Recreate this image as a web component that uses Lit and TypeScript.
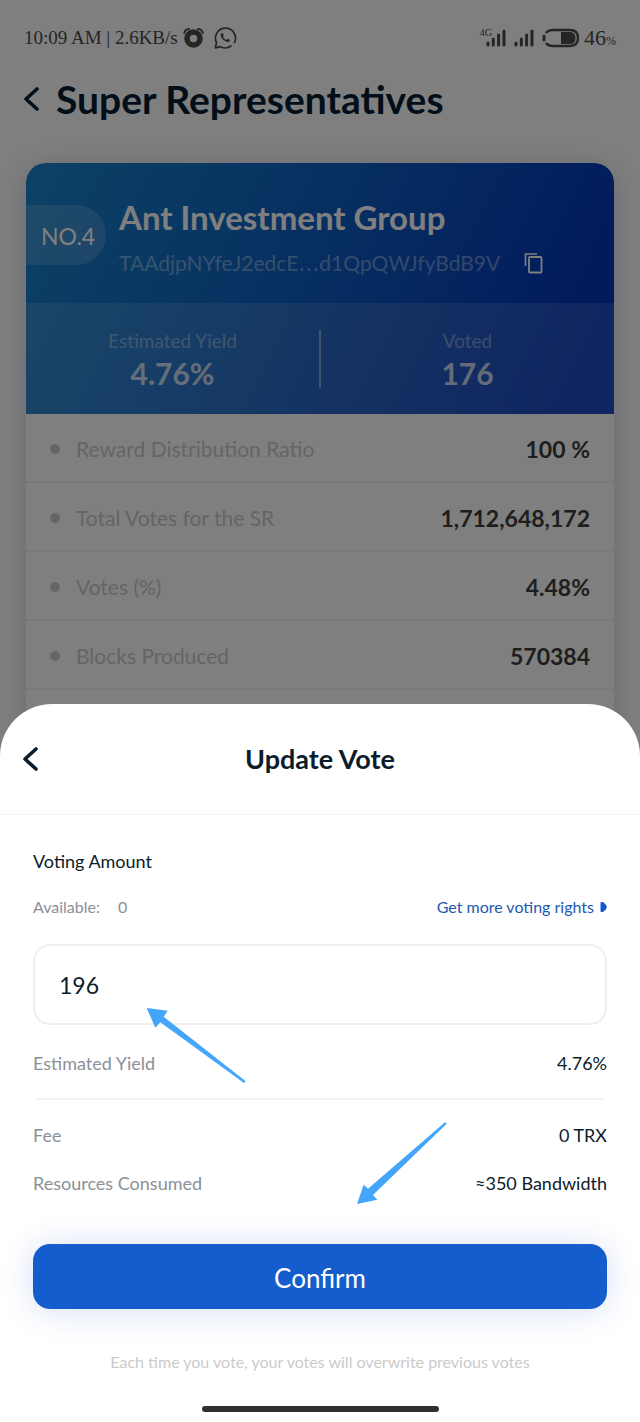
import { LitElement, html, css, svg } from "lit";
import { customElement, property, state } from "lit/decorators.js";

const chevron = svg`<path d="M13 2 L2 12 L13 22" fill="none" stroke="currentColor" stroke-width="3.600" stroke-linecap="round" stroke-linejoin="round" />`;

@customElement("status-bar")
class StatusBar extends LitElement {
  static styles = css`
    :host {
      display: flex;
      justify-content: space-between;
      align-items: center;
      height: 76px;
      padding: 0 24px;
      color: #4a4a4a;
      font-family: "Liberation Serif", serif;
      font-size: 22px;
    }
    .group {
      display: flex;
      align-items: center;
      gap: 8px;
    }
    .left {
      gap: 5px;
      font-size: 19px;
    }
    .battery {
      display: flex;
      align-items: center;
      gap: 4px;
    }
    .icon {
      display: block;
      overflow: visible;
    }
    .network {
      display: flex;
      align-items: flex-start;
    }
    .generation {
      font-size: 10px;
      line-height: 8px;
      margin-right: -6px;
    }
    .small {
      font-size: 12px;
    }
  `;

  private bars() {
    return html`<svg class="icon" width="20" height="18" viewBox="0 0 20 18" aria-hidden="true">
      <g stroke="currentColor" stroke-width="3" stroke-linecap="round">
        <path d="M2 14V16M7.300 10V16M12.600 6V16M18 2V16" />
      </g>
    </svg>`;
  }

  render() {
    return html`
      <div class="group left">
        <span>10:09 AM | 2.6KB/s</span>
        <svg class="icon" width="21" height="20" viewBox="0 0 21 20" aria-hidden="true">
          <circle cx="10.500" cy="10.500" r="6.500" fill="none" stroke="currentColor" stroke-width="5.500" />
          <path d="M1.200 5Q2 1.500 6 1M19.800 5Q19 1.500 15 1" fill="none" stroke="currentColor" stroke-width="2" stroke-linecap="round" />
        </svg>
        <svg class="icon" width="28" height="22" viewBox="-5 0 28 22" aria-hidden="true">
          <path d="M20.500 15.500A10 10 0 1 0 2.600 15.800L1.300 20.800L6.500 19.700A10 10 0 0 0 17 19" fill="none" stroke="currentColor" stroke-width="1.700" stroke-linecap="round" stroke-linejoin="round" />
          <path d="M7.500 6.300C6 7.300 6.300 9.500 8.600 12C11 14.500 14 15.800 15.500 14.200C16.300 13.200 16 12.600 13.600 11.700L12.300 12.900C10.600 12.200 9.600 11 9 9.800L9.800 8.500L8.900 6.200Z" fill="currentColor" />
        </svg>
      </div>
      <div class="group">
        <span class="network"><span class="generation">4G</span>${this.bars()}</span>
        ${this.bars()}
        <span class="battery">
          <svg class="icon" width="38" height="20" viewBox="0 0 38 20" aria-hidden="true">
            <path d="M4 5Q6 2 11 2H28Q36 2 36 10T28 18H11Q6 18 4 15" fill="none" stroke="currentColor" stroke-width="2.400" />
            <path d="M2 8V12" stroke="currentColor" stroke-width="3" stroke-linecap="round" />
            <path d="M19 4H28Q33.500 4 33.500 10T28 16H19Z" fill="currentColor" />
          </svg>
          <span>46<span class="small">%</span></span>
        </span>
      </div>
    `;
  }
}

@customElement("representative-card")
class RepresentativeCard extends LitElement {
  @property({ attribute: false }) details: [string, string][] = [];

  static styles = css`
    :host {
      display: flex;
      flex-direction: column;
      border-radius: 20px 20px 0 0;
      background: #fff;
      box-shadow: 0 4px 32px rgba(30, 40, 110, 0.2);
    }
    .hero {
      border-radius: 20px 20px 0 0;
      overflow: hidden;
      color: #fff;
      background: linear-gradient(116deg, #1a84cc 0%, #1068c4 35%, #0a4cbe 65%, #0030b8 95%);
    }
    .identity {
      display: flex;
      align-items: flex-start;
      height: 140px;
      box-sizing: border-box;
      padding-top: 36px;
      gap: 13px;
    }
    .rank {
      flex: none;
      box-sizing: border-box;
      width: 80px;
      height: 60px;
      margin-top: 6px;
      padding-left: 15px;
      border-radius: 0 30px 30px 0;
      background: rgba(255, 255, 255, 0.16);
      font-size: 23px;
      line-height: 62px;
    }
    .name {
      margin: 0;
      font-size: 33px;
      line-height: 36px;
      font-weight: 700;
    }
    .address {
      display: flex;
      align-items: center;
      gap: 24px;
      margin-top: 14px;
      font-size: 21px;
      line-height: 28px;
    }
    .dots {
      font-family: "DejaVu Sans", sans-serif;
      line-height: 20px;
    }
    .muted {
      color: rgba(255, 255, 255, 0.4);
    }
    .copy {
      padding: 0;
      border: 0;
      background: none;
      color: #fff;
      line-height: 0;
    }
    .stats {
      display: grid;
      grid-template-columns: 1fr 2px 1fr;
      align-items: center;
      height: 111px;
      margin: 0;
      background: rgba(255, 255, 255, 0.12);
      text-align: center;
    }
    .rule {
      height: 58px;
      background: rgba(255, 255, 255, 0.4);
    }
    .stat dt {
      font-size: 19px;
      line-height: 30px;
    }
    .stat dd {
      margin: 0;
      padding-bottom: 2px;
      font-size: 30px;
      line-height: 34px;
      font-weight: 700;
      color: rgba(255, 255, 255, 0.75);
    }
    .details {
      margin: 0;
    }
    .row {
      display: flex;
      align-items: center;
      box-sizing: border-box;
      height: 69px;
      padding: 0 24px;
      background: repeating-linear-gradient(90deg, #f1f1f1 0 6px, #fbfbfb 6px 9px) bottom / 100% 2px no-repeat;
    }
    .bullet {
      width: 10px;
      height: 10px;
      margin-right: 16px;
      border-radius: 50%;
      background: #cacaca;
    }
    .row dt {
      display: flex;
      align-items: center;
      flex: 1;
      font-size: 21px;
      line-height: 28px;
      color: #cacaca;
    }
    .row dd {
      margin: 0;
      font-size: 23px;
      line-height: 28px;
      font-weight: 700;
      color: #3c3c3c;
    }
  `;

  render() {
    return html`
      <div class="hero">
        <div class="identity">
          <div class="rank">NO.4</div>
          <div>
            <h2 class="name">Ant Investment Group</h2>
            <div class="address">
              <span class="muted">TAAdjpNYfeJ2edcE<span class="dots">…</span>d1QpQWJfyBdB9V</span>
              <button class="copy" aria-label="Copy address">
                <svg width="19" height="22" viewBox="0 0 19 22" aria-hidden="true">
                  <path d="M1.500 14V2H13" fill="none" stroke="currentColor" stroke-width="1.600" />
                  <rect x="5" y="5" width="12.500" height="15.500" rx="1" fill="none" stroke="currentColor" stroke-width="1.800" />
                </svg>
              </button>
            </div>
          </div>
        </div>
        <dl class="stats">
          <div class="stat"><dt class="muted">Estimated Yield</dt><dd>4.76%</dd></div>
          <div class="rule"></div>
          <div class="stat"><dt class="muted">Voted</dt><dd>176</dd></div>
        </dl>
      </div>
      <dl class="details">
        ${this.details.map(
          ([label, value]) => html`<div class="row"><dt><span class="bullet"></span>${label}</dt><dd>${value}</dd></div>`
        )}
      </dl>
    `;
  }
}

@customElement("vote-sheet")
class VoteSheet extends LitElement {
  @state() private amount = "196";

  static styles = css`
    :host {
      display: block;
      border-radius: 52px 52px 0 0;
      background: #fff;
      color: #0b1c2b;
    }
    .top {
      display: grid;
      grid-template-columns: 40px 1fr 40px;
      align-items: center;
      height: 110px;
      padding: 0 23px;
      border-bottom: 1px solid #f3f3f3;
    }
    .back {
      padding: 0;
      border: 0;
      background: none;
      color: inherit;
      line-height: 0;
      text-align: left;
    }
    .title {
      margin: 0;
      text-align: center;
      font-size: 27px;
      line-height: 36px;
      font-weight: 700;
    }
    .body {
      display: flex;
      flex-direction: column;
      padding: 34px 33px 10px;
      font-size: 18px;
      line-height: 24px;
    }
    .line {
      display: flex;
      justify-content: space-between;
    }
    .available {
      margin-top: 22px;
      font-size: 16px;
    }
    .grey {
      color: #8a9096;
    }
    .count {
      margin-left: 18px;
    }
    .more {
      display: flex;
      align-items: center;
      gap: 6px;
      color: #2159b0;
      text-decoration: none;
    }
    .field {
      position: relative;
      margin-top: 25px;
    }
    .amount {
      display: block;
      box-sizing: border-box;
      width: 100%;
      height: 81px;
      padding: 0 24px;
      border: 2px solid #efefef;
      border-radius: 17px;
      background: #fff;
      color: inherit;
      font: 23px/28px Lato, sans-serif;
      outline: none;
    }
    .pointer {
      position: absolute;
      pointer-events: none;
    }
    .to-amount {
      left: 113px;
      top: 64px;
    }
    .to-confirm {
      left: calc(50% + 36px);
      top: 70px;
    }
    .costs {
      position: relative;
      margin: 26px 0 0;
    }
    .costs dd {
      margin: 0;
    }
    .divider {
      height: 2px;
      margin: 23px 3px;
      background: #f4f4f4;
    }
    .resources {
      margin-top: 24px;
    }
    .confirm {
      height: 65px;
      margin-top: 49px;
      padding: 2px 0 0;
      border: 0;
      border-radius: 17px;
      background: #155dcd;
      box-shadow: 0 2px 32px rgba(50, 80, 210, 0.2);
      color: #fff;
      font: 26px/32px Lato, sans-serif;
    }
    .note {
      margin: 41px 0 0;
      text-align: center;
      font-size: 16px;
      color: #cbcbcb;
    }
    .home {
      align-self: center;
      width: 237px;
      height: 6px;
      margin-top: 32px;
      border-radius: 3px;
      background: #303030;
    }
  `;

  render() {
    return html`
      <header class="top">
        <button class="back" aria-label="Back">
          <svg width="15" height="24" viewBox="0 0 15 24" aria-hidden="true">${chevron}</svg>
        </button>
        <h2 class="title">Update Vote</h2>
      </header>
      <div class="body">
        <label for="amount">Voting Amount</label>
        <div class="line available">
          <span class="grey">Available:<span class="count">0</span></span>
          <a class="more" href="#">Get more voting rights
            <svg width="7" height="10" viewBox="0 0 7 10" aria-hidden="true">
              <path d="M1.500 0H3Q6.800 3 6.800 5T3 10H1.500Q0.500 10 0.500 9V1Q0.500 0 1.500 0Z" fill="#1555cf" />
            </svg>
          </a>
        </div>
        <div class="field">
          <input
            class="amount"
            id="amount"
            inputmode="numeric"
            .value=${this.amount}
            @input=${(e: InputEvent) => (this.amount = (e.target as HTMLInputElement).value)}
          />
          <svg class="pointer to-amount" width="101" height="77" viewBox="0 0 101 77" aria-hidden="true">
            <path d="M0.700 0L21.700 2.700L17.700 8.700L99.700 73.300L98 75L14.300 14.300L9.300 19.700Z" fill="#44a6fa" />
          </svg>
        </div>
        <dl class="costs">
          <div class="line"><dt class="grey">Estimated Yield</dt><dd>4.76%</dd></div>
          <div class="divider"></div>
          <div class="line"><dt class="grey">Fee</dt><dd>0 TRX</dd></div>
          <div class="line resources"><dt class="grey">Resources Consumed</dt><dd>≈350 Bandwidth</dd></div>
          <svg class="pointer to-confirm" width="92" height="84" viewBox="0 0 92 84" aria-hidden="true">
            <path d="M1 83L7.700 63.700L12 67.700L89.300 1L90.700 2.700L17 74L21.300 78.700Z" fill="#44a6fa" />
          </svg>
        </dl>
        <button class="confirm">Confirm</button>
        <p class="note">Each time you vote, your votes will overwrite previous votes</p>
        <div class="home"></div>
      </div>
    `;
  }
}

@customElement("app-root")
class AppRoot extends LitElement {
  static styles = css`
    :host {
      display: grid;
      min-height: 100vh;
      overflow: hidden;
      font-family: Lato, sans-serif;
      background: #fff;
    }
    .page,
    .scrim,
    .sheet {
      grid-area: 1 / 1;
      min-width: 0;
    }
    .page {
      display: flex;
      flex-direction: column;
    }
    .heading {
      display: flex;
      align-items: center;
      gap: 17px;
      height: 46px;
      padding: 0 24px;
      color: #041e34;
    }
    .back {
      padding: 0;
      border: 0;
      background: none;
      color: inherit;
      line-height: 0;
    }
    .title {
      margin: 0;
      font-size: 39px;
      line-height: 46px;
      font-weight: 700;
    }
    .card {
      flex: 1;
      margin: 41px 26px 0;
    }
    .scrim {
      background: rgba(0, 0, 0, 0.5);
      z-index: 1;
    }
    .sheet {
      align-self: end;
      z-index: 2;
    }
  `;

  private details: [string, string][] = [
    ["Reward Distribution Ratio", "100 %"],
    ["Total Votes for the SR", "1,712,648,172"],
    ["Votes (%)", "4.48%"],
    ["Blocks Produced", "570384"],
  ];

  render() {
    return html`
      <main class="page">
        <status-bar></status-bar>
        <div class="heading">
          <button class="back" aria-label="Back">
            <svg width="15" height="24" viewBox="0 0 15 24" aria-hidden="true">${chevron}</svg>
          </button>
          <h1 class="title">Super Representatives</h1>
        </div>
        <representative-card class="card" .details=${this.details}></representative-card>
      </main>
      <div class="scrim"></div>
      <vote-sheet class="sheet" role="dialog" aria-label="Update Vote"></vote-sheet>
    `;
  }
}
